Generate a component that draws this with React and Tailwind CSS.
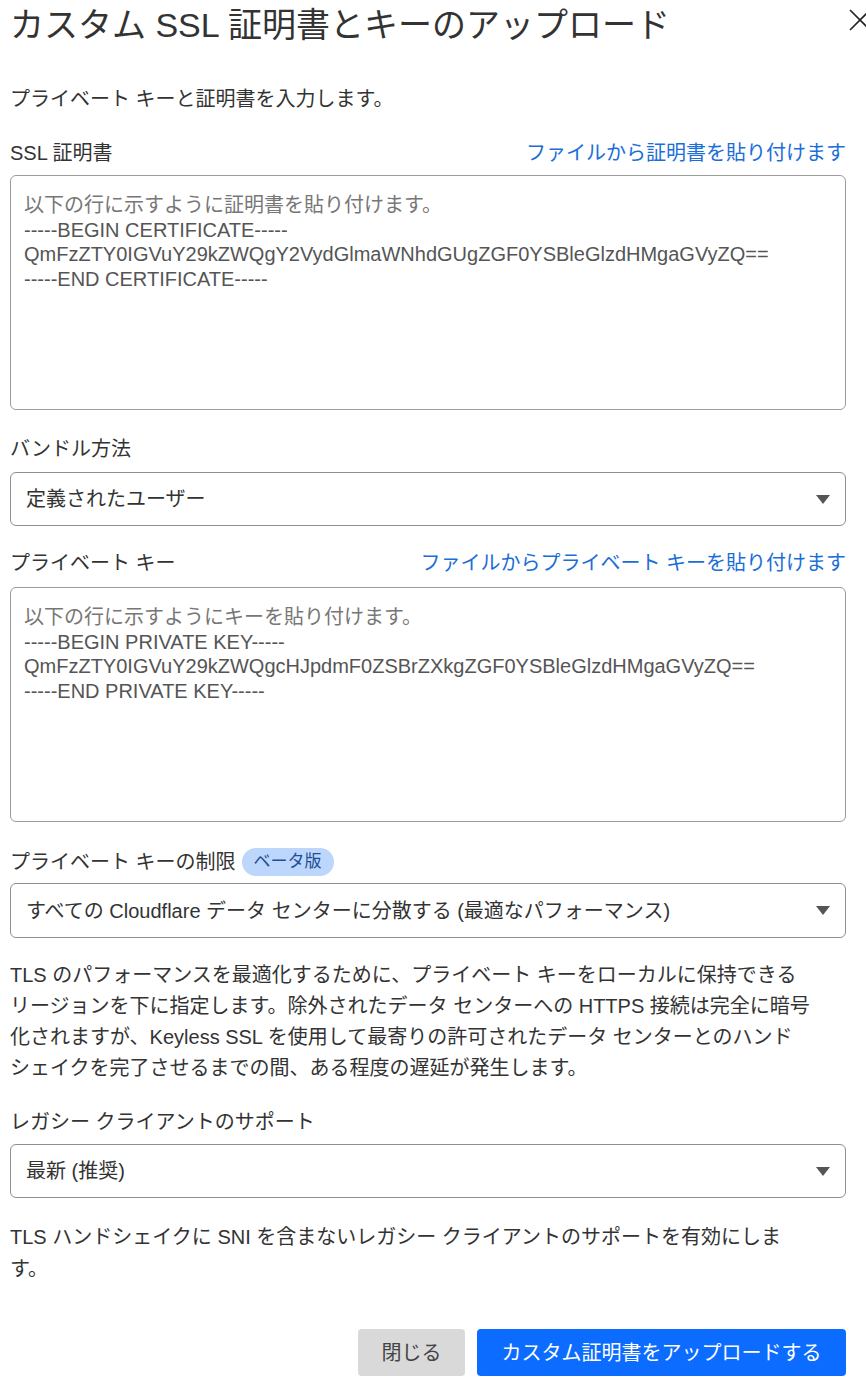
import React from 'react';

const FONT = "font-['Liberation_Sans','Noto_Sans_CJK_JP',sans-serif]";

// 入力欄ふうの箱(テキストエリア)
const PasteBox = ({ hint, lines }) => (
  <div className="h-[235px] rounded-[6px] border border-[#9c9c9c] px-[13px] pt-[17px] text-[20px] leading-[24.5px] text-[#555]">
    <div className="text-[#777]">{hint}</div>
    {lines.map((l) => (
      <div key={l}>{l}</div>
    ))}
  </div>
);

const Caret = () => (
  <svg width="14" height="9" viewBox="0 0 14 9" className="shrink-0">
    <path d="M0 0 H14 L7 9 Z" fill="#555" />
  </svg>
);

const Select = ({ value, h = 'h-[54px]' }) => (
  <div className={`${h} flex items-center justify-between rounded-[6px] border border-[#8f8f8f] pl-[15px] pr-[15px] text-[20px] text-[#333]`}>
    <span>{value}</span>
    <Caret />
  </div>
);

const Label = ({ children, className = '' }) => (
  <div className={`text-[20px] leading-[28px] text-[#333] ${className}`}>{children}</div>
);

export default function App() {
  return (
    <div className={`${FONT} w-[866px] overflow-hidden bg-white`}>
      <div className="pl-[10px] pr-[20px] pb-[25px]">
        {/* ヘッダー */}
        <div className="mt-[3px] flex items-start justify-between -mr-[20px]">
          <h1 className="text-[34px] leading-[44px] font-normal text-[#333]">
            カスタム SSL 証明書とキーのアップロード
          </h1>
          <svg width="24" height="24" viewBox="0 0 24 24" className="mt-[5px] -mr-[6px] shrink-0">
            <path d="M2 2 L22 22 M22 2 L2 22" stroke="#222" strokeWidth="1.6" fill="none" />
          </svg>
        </div>

        <p className="mt-[38px] text-[20px] leading-[28px] text-[#333]">
          プライベート キーと証明書を入力します。
        </p>

        {/* 証明書 */}
        <div className="mt-[26px] flex items-center justify-between">
          <Label>SSL 証明書</Label>
          <a className="text-[20px] leading-[28px] text-[#1a6ed8]">ファイルから証明書を貼り付けます</a>
        </div>
        <div className="mt-[8px]">
          <PasteBox
            hint="以下の行に示すように証明書を貼り付けます。"
            lines={[
              '-----BEGIN CERTIFICATE-----',
              'QmFzZTY0IGVuY29kZWQgY2VydGlmaWNhdGUgZGF0YSBleGlzdHMgaGVyZQ==',
              '-----END CERTIFICATE-----',
            ]}
          />
        </div>

        <Label className="mt-[25px]">バンドル方法</Label>
        <div className="mt-[9px]">
          <Select value="定義されたユーザー" />
        </div>

        {/* 秘密鍵 */}
        <div className="mt-[23px] flex items-center justify-between">
          <Label>プライベート キー</Label>
          <a className="text-[20px] leading-[28px] text-[#1a6ed8]">ファイルからプライベート キーを貼り付けます</a>
        </div>
        <div className="mt-[10px]">
          <PasteBox
            hint="以下の行に示すようにキーを貼り付けます。"
            lines={[
              '-----BEGIN PRIVATE KEY-----',
              'QmFzZTY0IGVuY29kZWQgcHJpdmF0ZSBrZXkgZGF0YSBleGlzdHMgaGVyZQ==',
              '-----END PRIVATE KEY-----',
            ]}
          />
        </div>

        <div className="mt-[26px] flex h-[28px] items-center gap-[6px]">
          <Label>プライベート キーの制限</Label>
          <span className="flex h-[28px] items-center rounded-full bg-[#bcd7fb] px-[12px] text-[17px] text-[#1f4e96]">
            ベータ版
          </span>
        </div>
        <div className="mt-[7px]">
          <Select value="すべての Cloudflare データ センターに分散する (最適なパフォーマンス)" h="h-[55px]" />
        </div>

        <p className="mt-[22px] w-[800px] text-[20px] leading-[31px] text-[#333]">
          TLS のパフォーマンスを最適化するために、プライベート キーをローカルに保持できるリージョンを下に指定します。除外されたデータ センターへの HTTPS 接続は完全に暗号化されますが、Keyless SSL を使用して最寄りの許可されたデータ センターとのハンドシェイクを完了させるまでの間、ある程度の遅延が発生します。
        </p>

        <Label className="mt-[24px]">レガシー クライアントのサポート</Label>
        <div className="mt-[8px]">
          <Select value="最新 (推奨)" />
        </div>

        <p className="mt-[23px] w-[800px] text-[20px] leading-[32px] text-[#333]">
          TLS ハンドシェイクに SNI を含まないレガシー クライアントのサポートを有効にします。
        </p>

        {/* ボタン */}
        <div className="mt-[44px] flex justify-end gap-[12px]">
          <button className="h-[47px] w-[107px] rounded-[4px] bg-[#d9d9d9] text-[20px] text-[#444]">
            閉じる
          </button>
          <button className="h-[47px] w-[369px] rounded-[4px] bg-[#0b6cff] text-[20px] text-white">
            カスタム証明書をアップロードする
          </button>
        </div>
      </div>
    </div>
  );
}
